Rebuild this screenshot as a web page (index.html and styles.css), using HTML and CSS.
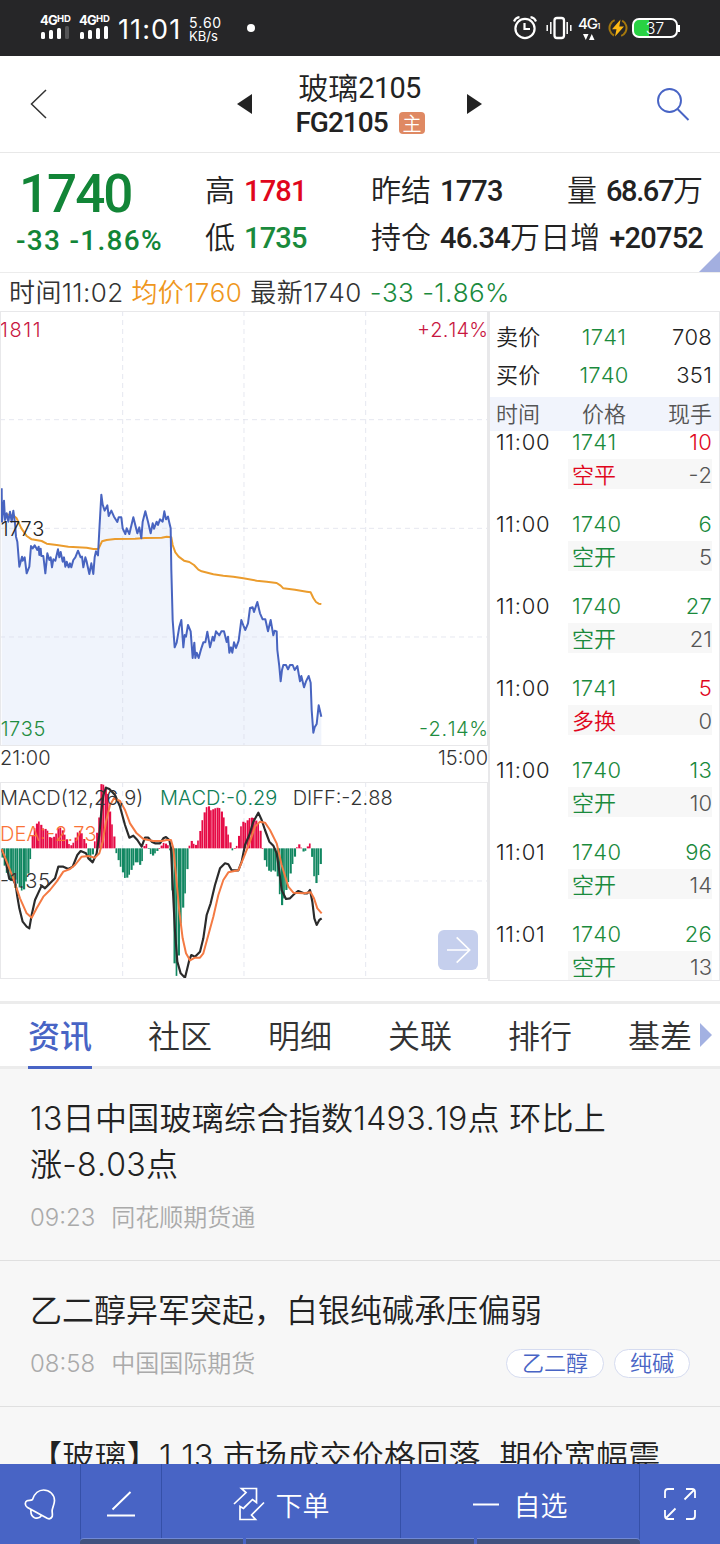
FILE: index.html
```html
<!DOCTYPE html>
<html lang="zh-CN">
<head>
<meta charset="utf-8">
<title>玻璃2105</title>
<link rel="stylesheet" href="styles.css">
</head>
<body>
<div class="status">
  <div class="sim"><b>4G<i>HD</i></b><span class="bars"><u></u><u></u><u></u><u class="off"></u></span></div>
  <div class="sim"><b>4G<i>HD</i></b><span class="bars"><u></u><u></u><u></u><u></u></span></div>
  <div class="clock">11:01</div>
  <div class="speed"><span>5.60</span><span>KB/s</span></div>
  <div class="dot"></div>
  <div class="status-icons">
    <svg class="alarm" width="24" height="24" viewBox="0 0 24 24" fill="none" stroke="#fff" stroke-width="2.2"><circle cx="12" cy="12.5" r="9.6"/><path d="M11.500 7v6h5.500M1 5.500C2 3 4 1.500 6.500 1.200M23 5.500C22 3 20 1.500 17.500 1.200"/></svg>
    <svg class="vibrate" width="26" height="24" viewBox="0 0 26 24" fill="none" stroke="#fff" stroke-width="2"><rect x="8.500" y="2" width="9.500" height="20" rx="2.500" stroke-width="2.300"/><path d="M4.800 6v12M21.200 6v12M1.200 9v6M24.800 9v6" stroke-width="1.500"/></svg>
    <div class="net"><b>4G<small>1</small></b><svg width="12" height="6" viewBox="0 0 12 6" fill="#fff"><path d="M0 0h5.500L2.800 6zM6 6h5.500L8.800 0z"/></svg></div>
    <svg class="bolt" width="20" height="20" viewBox="0 0 20 20"><circle cx="10" cy="10" r="8.500" fill="none" stroke="#a5780d" stroke-width="2" stroke-dasharray="19 7.700" transform="rotate(118 10 10)"/><path d="M12.500 1.500 4 11.300h4.500L7 18.500l9-10h-4.700z" fill="#fdb913"/></svg>
    <div class="battery"><span>37</span></div>
  </div>
</div>

<header class="header">
  <svg class="back" width="18" height="30" viewBox="0 0 18 30" fill="none" stroke="#333" stroke-width="1.500"><path d="M16 1 1.500 15 16 29"/></svg>
  <svg class="prev" width="15" height="20" viewBox="0 0 15 20"><path d="M15 0v20L0 10z" fill="#222"/></svg>
  <div class="contract">
    <div class="contract-name">玻璃<span>2105</span></div>
    <div class="contract-code"><span>FG2105</span><em>主</em></div>
  </div>
  <svg class="next" width="15" height="20" viewBox="0 0 15 20"><path d="M0 0v20l15-10z" fill="#222"/></svg>
  <svg class="search" width="34" height="34" viewBox="0 0 34 34" fill="none" stroke="#4864c5" stroke-width="1.900"><circle cx="13.500" cy="13.500" r="11.500"/><path d="M21.500 22 32.500 33"/></svg>
</header>

<section class="quote">
  <div class="last"><div class="last-price">1740</div><div class="change">-33 -1.86%</div></div>
  <dl class="col col-a"><div><dt>高</dt><dd class="red">1781</dd></div><div><dt>低</dt><dd class="green">1735</dd></div></dl>
  <dl class="col col-b"><div><dt>昨结</dt><dd>1773</dd></div><div><dt>持仓</dt><dd>46.34<s>万</s></dd></div></dl>
  <dl class="col col-c"><div><dt>量</dt><dd class="volume">68.67<s>万</s></dd></div><div><dt>日增</dt><dd>+20752</dd></div></dl>
  <svg class="corner" width="21" height="21" viewBox="0 0 21 21"><path d="M21 0v21H0z" fill="#a3afe0"/></svg>
</section>

<div class="info"><span>时间11:02</span><span class="orange">均价1760</span><span>最新1740</span><span class="green">-33</span><span class="green">-1.86%</span></div>

<main class="market">
  <div class="charts">
    <svg class="chart price" viewBox="0 -477 1464 1305">
      <g class="fill">
        <path d="M5 825V55L6 155 12 92 15 150 20 130 25 155 30 125 35 155 40 122 45 160 48 200 52 215 58 290 66 260 68 272 74 262 80 310 88 290 93 228 98 235 104 226 112 240 116 230 118 255 122 236 124 258 130 258 136 310 142 250 148 270 152 262 156 292 160 268 166 272 174 238 178 262 182 246 188 275 192 262 196 290 200 275 206 292 210 280 214 292 220 270 226 262 234 242 242 262 246 260 250 292 256 262 260 275 268 312 274 280 280 312 284 262 288 244 294 256 298 180 304 74 308 104 314 122 322 106 326 138 334 122 342 140 352 156 356 142 364 142 368 175 376 192 380 175 388 192 400 142 412 190 418 172 424 205 428 155 436 124 444 155 452 190 458 160 462 176 470 155 474 165 480 148 488 155 493 124 498 148 504 140 508 158 512 175 514 300 518 450 524 532 530 518 538 470 544 450 550 532 554 495 558 500 564 465 572 484 578 564 583 518 586 564 590 548 596 564 604 535 610 517 616 517 622 485 630 532 638 500 642 512 648 484 658 496 664 484 672 484 680 516 684 500 688 548 693 532 697 548 702 517 708 534 716 512 724 450 730 466 736 480 744 460 750 414 758 412 762 426 772 396 780 430 788 448 796 448 804 484 812 450 820 496 824 482 830 484 832 540 838 590 842 634 846 600 850 585 858 585 864 598 870 585 878 585 884 600 892 588 900 634 904 618 912 652 918 634 926 618 932 638 935 720 940 788 944 772 950 762 956 706 964 740V825Z"/>
      </g>
      <g class="grid"><path d="M368-477V825M732-477V825M1097-477V825M0-151H1464M0 175H1464M0 501H1464"/></g>
      <path class="avg" d="M5 130 42 138 50 145 64 175 80 198 95 208 125 213 140 221 170 225 205 230 260 233 280 237 295 237 306 214 320 210 345 207 405 206 435 204 485 203 500 200 514 202 518 225 526 247 536 260 552 272 568 276 582 285 595 299 605 304 640 313 670 317 700 320 730 325 770 332 800 335 830 339 842 347 850 355 885 359 920 365 932 367 940 384 948 396 956 401 964 402"/>
      <path class="line" d="M5 55 6 155 12 92 15 150 20 130 25 155 30 125 35 155 40 122 45 160 48 200 52 215 58 290 66 260 68 272 74 262 80 310 88 290 93 228 98 235 104 226 112 240 116 230 118 255 122 236 124 258 130 258 136 310 142 250 148 270 152 262 156 292 160 268 166 272 174 238 178 262 182 246 188 275 192 262 196 290 200 275 206 292 210 280 214 292 220 270 226 262 234 242 242 262 246 260 250 292 256 262 260 275 268 312 274 280 280 312 284 262 288 244 294 256 298 180 304 74 308 104 314 122 322 106 326 138 334 122 342 140 352 156 356 142 364 142 368 175 376 192 380 175 388 192 400 142 412 190 418 172 424 205 428 155 436 124 444 155 452 190 458 160 462 176 470 155 474 165 480 148 488 155 493 124 498 148 504 140 508 158 512 175 514 300 518 450 524 532 530 518 538 470 544 450 550 532 554 495 558 500 564 465 572 484 578 564 583 518 586 564 590 548 596 564 604 535 610 517 616 517 622 485 630 532 638 500 642 512 648 484 658 496 664 484 672 484 680 516 684 500 688 548 693 532 697 548 702 517 708 534 716 512 724 450 730 466 736 480 744 460 750 414 758 412 762 426 772 396 780 430 788 448 796 448 804 484 812 450 820 496 824 482 830 484 832 540 838 590 842 634 846 600 850 585 858 585 864 598 870 585 878 585 884 600 892 588 900 634 904 618 912 652 918 634 926 618 932 638 935 720 940 788 944 772 950 762 956 706 964 740"/>
      <g class="labels">
        <text x="0" y="-400" fill="#c8163f" textLength="122">1811</text><text x="1251" y="-400" fill="#c8163f" textLength="213">+2.14%</text>
        <text x="2" y="197" fill="#222" textLength="131">1773</text>
        <text x="2" y="797" fill="#1f8d40" textLength="134">1735</text><text x="1257" y="797" fill="#1f8d40" textLength="207">-2.14%</text>
      </g>
    </svg>
    <div class="axis"><span>21:00</span><span>15:00</span></div>
    <svg class="chart macd" viewBox="0 21 1464 591">
      <g class="grid"><path d="M368 21V612M732 21V612M1097 21V612M0 318H1464"/></g>
      <g id="histogram"></g>
      <path class="diff" d="M5 222 15 250 28 312 40 315 47 330 52 365 58 400 68 440 80 455 88 460 95 420 105 375 125 332 135 340 150 325 165 310 175 275 190 275 205 282 218 275 232 240 242 228 258 235 265 250 278 262 290 235 298 180 304 110 310 60 318 38 328 42 345 60 360 95 375 150 388 188 400 182 412 195 425 215 435 188 445 188 455 200 465 205 480 205 490 190 498 186 508 195 513 220 518 330 525 470 532 560 542 595 555 608 562 580 568 555 574 540 585 545 600 530 610 490 620 420 632 385 645 330 660 280 675 265 685 268 695 286 715 286 725 260 735 210 748 180 760 140 775 113 785 135 795 165 808 200 820 212 830 235 838 290 845 345 858 372 870 370 885 355 895 348 912 355 922 355 930 345 937 380 943 430 950 450 958 435 965 430"/>
      <path class="dea" d="M5 222 20 260 40 310 60 370 80 415 95 428 110 400 130 365 150 345 170 320 190 290 210 282 225 270 245 245 265 243 285 248 298 235 308 200 318 140 330 90 342 70 360 78 375 105 390 145 410 175 430 192 460 198 485 198 500 195 513 195 520 220 528 300 538 410 548 490 558 535 570 556 585 548 600 548 610 535 625 480 640 425 655 360 670 315 685 292 715 286 730 250 748 205 765 155 780 140 795 143 810 165 830 205 845 270 865 335 880 353 910 355 932 352 942 370 952 400 965 415"/>
      <g class="labels">
        <text x="0" y="90" fill="#333" textLength="430">MACD(12,26,9)</text>
        <text x="480" y="90" fill="#0d7d55" textLength="352">MACD:-0.29</text>
        <text x="878" y="90" fill="#333" textLength="300">DIFF:-2.88</text>
        <text x="0" y="197" fill="#fa7338" textLength="290">DEA:-2.73</text>
        <text x="0" y="339" fill="#333" textLength="150">-1.35</text>
      </g>
      <g class="go"><rect x="1314" y="465" width="120" height="120" rx="18"/><path d="M1341 525h67M1370 487l39 38-39 38"/></g>
    </svg>
  </div>
  <aside class="book">
    <div class="ask"><span>卖价</span><span class="green">1741</span><span>708</span></div>
    <div class="ask"><span>买价</span><span class="green">1740</span><span>351</span></div>
    <div class="book-head"><span>时间</span><span>价格</span><span>现手</span></div>
    <div class="trades">
      <div class="trade"><time>11:00</time><p class="green">1741</p><p class="red">10</p><div class="kind"><span class="red">空平</span><span>-2</span></div></div>
      <div class="trade"><time>11:00</time><p class="green">1740</p><p class="green">6</p><div class="kind"><span class="green">空开</span><span>5</span></div></div>
      <div class="trade"><time>11:00</time><p class="green">1740</p><p class="green">27</p><div class="kind"><span class="green">空开</span><span>21</span></div></div>
      <div class="trade"><time>11:00</time><p class="green">1741</p><p class="red">5</p><div class="kind"><span class="red">多换</span><span>0</span></div></div>
      <div class="trade"><time>11:00</time><p class="green">1740</p><p class="green">13</p><div class="kind"><span class="green">空开</span><span>10</span></div></div>
      <div class="trade"><time>11:01</time><p class="green">1740</p><p class="green">96</p><div class="kind"><span class="green">空开</span><span>14</span></div></div>
      <div class="trade"><time>11:01</time><p class="green">1740</p><p class="green">26</p><div class="kind"><span class="green">空开</span><span>13</span></div></div>
    </div>
  </aside>
</main>

<nav class="tabs"><a class="active">资讯</a><a>社区</a><a>明细</a><a>关联</a><a>排行</a><a>基差</a><svg width="12" height="24" viewBox="0 0 12 24"><path d="M0 0v24l12-12z" fill="#a3b1e2"/></svg></nav>

<section class="news">
  <article class="first"><h2>13日中国玻璃综合指数1493.19点 环比上<br>涨-8.03点</h2><footer><span>09:23</span><span class="source">同花顺期货通</span></footer></article>
  <article class="second"><h2>乙二醇异军突起，白银纯碱承压偏弱</h2><footer><span>08:58</span><span class="source">中国国际期货</span><b>乙二醇</b><b>纯碱</b></footer></article>
  <article class="third"><h2>【玻璃】1.13 市场成交价格回落&nbsp; 期价宽幅震</h2></article>
</section>

<div class="toolbar">
  <div class="tool"><svg width="34" height="34" viewBox="0 0 34 34" fill="none" stroke="#fff" stroke-width="1.700" stroke-linejoin="round"><path d="M9.500 12.500C11.500 6.500 16 3 20.500 3c6 0 11 4.500 11 10.500 0 3-1.500 6-2.300 9.500-.4 2 .6 3.500 0 6.500-1 2-3 2.800-5 1.800L4.500 20.500C1.800 19 1.600 15 4 13.800c1.800-1 3.800.2 5.500-1.300zM8 22.500c-.5 4 1 7 3.500 8.200 3 1 5.500.2 7-2.200"/></svg></div>
  <div class="tool"><svg width="30" height="30" viewBox="0 0 30 30" fill="none" stroke="#fff" stroke-width="1.900"><path d="M1 26.500h28M6.500 20.500 24.500 3"/></svg></div>
  <div class="tool wide"><svg width="32" height="34" viewBox="0 0 32 34" fill="none" stroke="#fff" stroke-width="1.700"><path d="M1 17 13 5.500 8.500 1.500H23.500V15.500L19.500 12.500 11 20.500M31 15.500 18.500 28 22.500 32.500H7V19.500L10.500 21.500 19.500 12.500"/></svg><span>下单</span></div>
  <div class="tool wide"><svg class="minus" width="26" height="3"><path d="M0 1.500h26" stroke="#fff" stroke-width="2"/></svg><span>自选</span></div>
  <div class="tool last-tool"><svg width="34" height="34" viewBox="0 0 34 34" fill="none" stroke="#fff" stroke-width="1.800"><path d="M2 11V5q0-3 3-3h6M23 2h6q3 0 3 3v6M31 3 21.500 12.500M32 23v6q0 3-3 3h-6M11 32H5q-3 0-3-3v-6M3 31 12.500 21.500"/></svg></div>
  <div class="sheet"><i></i><i></i><i></i></div>
</div>
<script src="chart.js"></script>
</body>
</html>
```

FILE: chart.js
```js
// Turning points of the MACD histogram: horizontal position, bar value (positive is up).
const points = [
  [1,-4],[3,-12],[6,-23],[10,-33],[15,-31],[20,-40],[23,-44],[26,-33],[29,-22],[31,-4],
  [31.5,8],[33,16],[36,24],[39,27],[43,20],[47,19],[50,10],[55,12],[58,20],[61,21],[65,13],[70,2],
  [73,5],[78,17],[81,18],[83,11],[86,6],[88,-7],[90,-13],[93,-5],[94.5,6],[97,16],[99,30],
  [101,64],[102,65],[106,61],[108,53],[110,35],[113,18],[115.500,4],[116,-4],[120,-17],[125,-30],
  [128,-29],[132,-20],[135,-14],[138,-14],[141,-18],[143,-8],[144.500,5],[147.500,4],
  [149,-3],[152,-8],[156,-4],[160,1],[164,6],[168,3],[170,-2],[171,-15],[172.7,-55],[174.3,-115],
  [176.7,-129],[178.7,-106],[181.3,-67],[184,-54],[186,-37],[188,-10],[189,1],[190.7,9],
  [192.7,5],[196.7,3],[199.3,13],[201.7,26],[204,35],[207.7,44],[210.7,38],[215,40],[219,41],
  [222.7,35],[225,26],[227.3,16],[229.3,10],[231.3,1],[232.7,-3],[235,1],[237.3,3],[240,20],
  [243.3,27],[246,25],[248.3,30],[253.3,31],[258.3,25],[261,15],[262.3,1],[264,-10],[267.3,-20],
  [270,-24],[273.3,-22],[276.7,-24],[278.7,-34],[280.7,-59],[282.7,-55],[286,-42],[289.3,-30],
  [292.7,-15],[296,-4],[297,2],[299,4],[301,1],[304.3,-5],[307,1],[309.7,5],[311,1],[312.7,-17],
  [315.3,-38],[318.3,-27],[322,-8]
];

function valueAt(x) {
  const i = points.findIndex(p => p[0] >= x);
  if (i <= 0) return points[0][1];
  const [x0, y0] = points[i - 1], [x1, y1] = points[i];
  return y0 + (y1 - y0) * (x - x0) / (x1 - x0);
}

const group = document.getElementById("histogram");
const zero = 220;
for (let n = 0; n < 149; n++) {
  const x = 1.5 + n * 2.15;
  const v = valueAt(x + 0.8) * 3;
  const bar = document.createElementNS("http://www.w3.org/2000/svg", "rect");
  bar.setAttribute("x", x * 3);
  bar.setAttribute("width", n % 2 ? 5 : 6.5);
  bar.setAttribute("y", v > 0 ? zero - v : zero);
  bar.setAttribute("height", Math.max(2, Math.abs(v)));
  bar.setAttribute("class", v > 0 ? "up" : "down");
  group.append(bar);
}
```

FILE: styles.css
```css
* { box-sizing: border-box; }
body { margin: 0; width: 720px; height: 1544px; overflow: hidden; display: flex; flex-direction: column; background: #fff; color: #222; font-family: Inter, "Noto Sans CJK SC", sans-serif; font-weight: 350; font-kerning: none; }
svg { display: block; flex: none; }
h2, p, dl, dd { margin: 0; font-weight: inherit; }
i, em { font-style: normal; }
s, u { text-decoration: none; }
.green { color: #1a8a3c; }
.red { color: #e0061c; }
.orange { color: #ef971d; }

.status { flex: none; height: 56px; background: #262628; color: #fff; display: flex; align-items: flex-start; padding-left: 40px; }
.sim { width: 39px; padding-top: 14px; }
.sim b { display: flex; font: 700 13px/13px Inter, sans-serif; letter-spacing: -.8px; height: 12px; }
.sim b i { font-size: 9.5px; line-height: 9px; letter-spacing: 0; }
.bars { display: flex; align-items: flex-end; gap: 4px; height: 13px; padding-left: 1px; }
.bars u { width: 4px; height: 7px; border-radius: 1.5px; background: #fff; }
.bars u:nth-child(2) { height: 9px; }
.bars u:nth-child(3) { height: 11px; }
.bars u:nth-child(4) { height: 13px; }
.bars .off { background: #545456; }
.clock { width: 71px; padding-top: 14px; font-size: 27px; line-height: 32px; font-weight: 400; letter-spacing: 1.1px; }
.speed { display: flex; flex-direction: column; width: 58px; padding-top: 15px; font-size: 13px; line-height: 13px; font-weight: 400; }
.speed span:first-child { font-size: 14px; line-height: 15px; letter-spacing: .7px; }
.speed span + span { line-height: 12px; }
.dot { width: 8px; height: 8px; border-radius: 50%; background: #fff; margin-top: 24px; }
.status-icons { display: flex; margin: 16px 42px 0 auto; }
.vibrate { margin-left: 9px; }
.net { width: 24px; margin-left: 6px; display: flex; flex-direction: column; }
.net b { font: 500 15px/16px Inter, sans-serif; letter-spacing: -1px; white-space: nowrap; }
.net small { font-size: 8px; }
.net svg { margin-left: 5px; }
.bolt { margin: 2px 4px 0 6px; }
.battery { width: 46px; height: 20px; margin-top: 2px; border: 2px solid #fff; border-radius: 7px; background: linear-gradient(90deg, #29d143 15px, transparent 15px); text-align: center; font-size: 16px; line-height: 16px; position: relative; }
.battery::after { content: ""; position: absolute; right: -4px; top: 5px; width: 2px; height: 7px; background: #fff; }

.header { flex: none; height: 97px; border-bottom: 1px solid #e8e8e8; display: flex; align-items: center; padding: 0 30px; }
.prev { margin-left: 189px; }
.contract { width: 215px; height: 96px; padding-top: 14px; display: flex; flex-direction: column; align-items: center; }
.contract-name { font-size: 30px; line-height: 36px; display: flex; }
.contract-name span { font: 400 29px/36px Roboto, sans-serif; letter-spacing: -.7px; }
.contract-code { display: flex; align-items: center; gap: 11px; padding-left: 1px; font: 500 28px/34px Roboto, sans-serif; letter-spacing: -1px; }
.contract-code em { width: 26px; height: 22px; border-radius: 4px; background: #df8963; color: #fff; text-align: center; font: 350 19px/21px "Noto Sans CJK SC", sans-serif; }
.search { margin-left: auto; }

.quote { flex: none; height: 120px; border-bottom: 1px solid #ececec; position: relative; display: flex; font: 500 29px/48px Roboto, sans-serif; }
.last { width: 205px; padding: 16px 0 0 19px; color: #128537; }
.last-price { font-size: 53px; line-height: 50px; letter-spacing: -2px; }
.change { font-size: 28px; line-height: 44px; margin-left: -3px; letter-spacing: 1.3px; white-space: nowrap; }
.col { padding-top: 14px; white-space: nowrap; }
.col > div { display: flex; height: 47px; }
.col dt, .col s { font: 350 30px/42px "Noto Sans CJK SC", sans-serif; letter-spacing: 0; }
.col dd { display: flex; margin-left: 9px; letter-spacing: -.8px; }
.col .volume { letter-spacing: -1.4px; }
.col-a { width: 166px; }
.col-b { width: 167px; }
.col-c { width: 182px; padding-right: 17px; }
.col-c > div { justify-content: flex-end; }
.corner { position: absolute; right: 0; bottom: 0; }

.info { flex: none; height: 38px; display: flex; gap: 8px; padding-left: 9px; font-size: 26px; line-height: 39px; letter-spacing: .38px; color: #333; white-space: nowrap; }
.info .orange { color: #ef971d; }
.info .green { color: #1a8a3c; }

.market { flex: none; height: 690px; display: flex; align-items: flex-start; }
.charts { width: 488px; }
.chart { width: 488px; overflow: hidden; outline: 1px solid #e8e8ea; outline-offset: -1px; }
.price { height: 435px; }
.macd { height: 197px; }
.axis { height: 36px; display: flex; justify-content: space-between; font-size: 20px; line-height: 24px; color: #333; }
.fill { fill: #f0f4fc; }
.grid { fill: none; stroke: #d9dce8; stroke-opacity: .65; stroke-width: 3; stroke-dasharray: 15 12; }
.line, .avg, .diff, .dea { fill: none; stroke-linejoin: round; stroke-width: 6; }
.line { stroke: #4864c0; }
.avg { stroke: #eb9c2d; }
.diff { stroke: #2b2b2b; stroke-width: 6.5; }
.dea { stroke: #f47a43; }
.labels { font-size: 60px; font-weight: 300; }
.up { fill: #e60b46; }
.down { fill: #118761; }
.go rect { fill: #c5cfed; }
.go path { fill: none; stroke: #fff; stroke-width: 5; }

.book { width: 232px; height: 670px; overflow: hidden; border: 1px solid #e8e8ea; border-left-width: 2px; font-size: 22px; letter-spacing: .2px; display: flex; flex-direction: column; padding-top: 6px; }
.ask, .book-head { display: flex; flex: none; height: 38px; line-height: 38px; padding: 0 7px 0 6px; justify-content: space-between; }
.ask span:nth-child(2), .book-head span:nth-child(2) { width: 80px; text-align: center; }
.ask span, .book-head span { width: 56px; }
.ask span:last-child, .book-head span:last-child { text-align: right; }
.book-head { height: 34px; line-height: 34px; margin-top: 3px; background: #f1f4fc; color: #555; letter-spacing: 0; }
.trades { margin-top: -4px; padding: 0 7px 0 6px; }
.trade { height: 82px; display: grid; grid-template: 32px 30px / 72px 1fr 60px; align-content: start; line-height: 30px; }
.trade time { letter-spacing: .7px; }
.trade p:nth-of-type(1) { padding-left: 4px; }
.trade p:nth-of-type(2) { text-align: right; }
.kind { grid-column: 2 / 4; display: flex; justify-content: space-between; padding-left: 4px; background: #f7f7f7; color: #555; height: 30px; line-height: 32px; letter-spacing: 0; }

.tabs { flex: none; position: relative; height: 68px; border-top: 3px solid #ececec; border-bottom: 3px solid #ececec; display: flex; gap: 56px; padding-left: 28px; font-size: 32px; line-height: 66px; color: #333; white-space: nowrap; }
.tabs a { width: 64px; flex: none; height: 65px; }
.tabs .active { color: #4864c5; font-weight: 500; border-bottom: 3px solid #4864c5; }
.tabs svg { position: absolute; right: 8px; top: 19px; }

.news { flex: none; height: 395px; overflow: hidden; background: #f7f7f7; }
.news article { border-bottom: 1px solid #e0e0e0; padding: 0 30px; }
.news h2 { font-size: 32px; line-height: 46px; white-space: nowrap; }
.news .first h2 { letter-spacing: .3px; }
.news .third h2 { letter-spacing: .25px; }
.news footer { display: flex; align-items: center; gap: 16px; height: 30px; color: #aaa; font-size: 24px; }
.news .source { margin-top: -3px; }
.news footer b { border: 1px solid #d5dbf0; border-radius: 15px; background: #fff; color: #4864c5; height: 29px; padding: 0 15px; font-weight: 350; font-size: 22px; line-height: 26px; }
.news footer b:first-of-type { margin-left: auto; }
.news footer b + b { margin-left: -6px; }
.news .first { height: 192px; padding-top: 27px; }
.first footer { margin-top: 14px; }
.news .second { height: 146px; padding-top: 27px; }
.second footer { margin-top: 14px; }
.news .third { padding-top: 27px; }

.toolbar { flex: none; height: 80px; position: relative; display: flex; background: #4864c5; color: #fff; }
.tool { flex: none; width: 81px; display: flex; align-items: center; justify-content: center; border-right: 1px solid #3550a8; }
.toolbar .last-tool { border-right: 0; width: 80px; }
.tool.wide { width: 239px; gap: 11px; font-size: 27px; }
.wide .minus { margin-right: 4px; }
.sheet { position: absolute; left: 80px; bottom: 0; width: 560px; height: 6px; display: flex; gap: 3px; }
.sheet i { flex: 227; background: #41527f; border-top: 1px solid #7189d5; }
.sheet i:first-child, .sheet i:last-child { flex: 163; }
.sheet i:first-child { border-top-left-radius: 4px; }
.sheet i:last-child { border-top-right-radius: 4px; }
```
